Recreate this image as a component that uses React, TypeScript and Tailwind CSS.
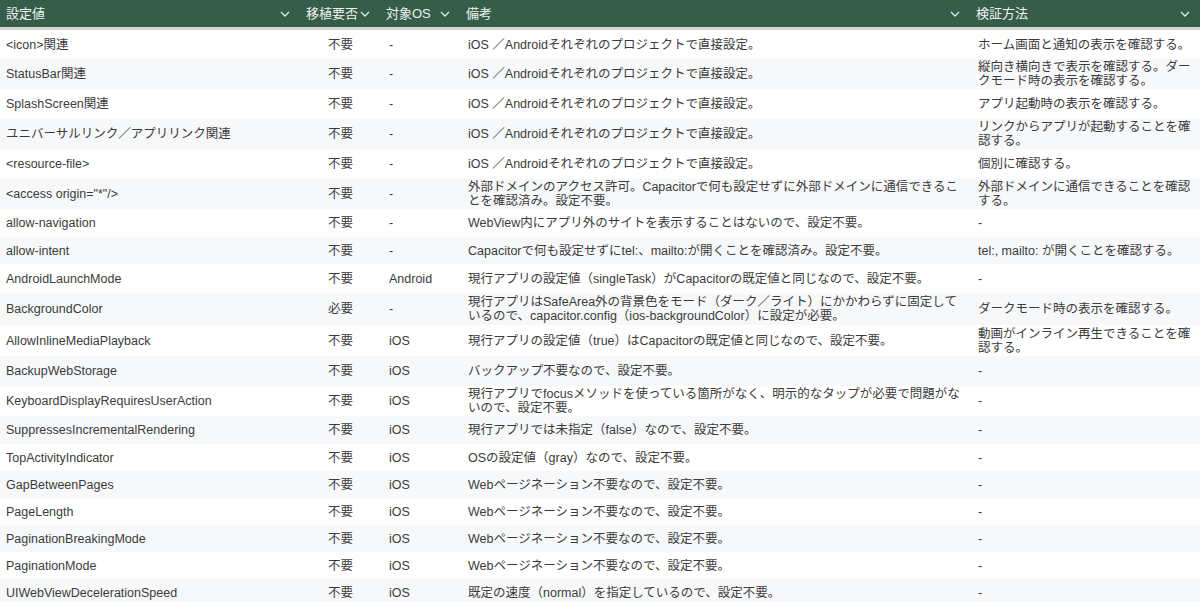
import React from "react";

const rows: [string, string, string, string, string, number][] = [
  ["<icon>関連", "不要", "-", "iOS ／Androidそれぞれのプロジェクトで直接設定。", "ホーム画面と通知の表示を確認する。", 29],
  ["StatusBar関連", "不要", "-", "iOS ／Androidそれぞれのプロジェクトで直接設定。", "縦向き横向きで表示を確認する。ダークモード時の表示を確認する。", 30],
  ["SplashScreen関連", "不要", "-", "iOS ／Androidそれぞれのプロジェクトで直接設定。", "アプリ起動時の表示を確認する。", 30],
  ["ユニバーサルリンク／アプリリンク関連", "不要", "-", "iOS ／Androidそれぞれのプロジェクトで直接設定。", "リンクからアプリが起動することを確認する。", 30],
  ["<resource-file>", "不要", "-", "iOS ／Androidそれぞれのプロジェクトで直接設定。", "個別に確認する。", 30],
  ["<access origin=\"*\"/>", "不要", "-", "外部ドメインのアクセス許可。Capacitorで何も設定せずに外部ドメインに通信できることを確認済み。設定不要。", "外部ドメインに通信できることを確認する。", 30],
  ["allow-navigation", "不要", "-", "WebView内にアプリ外のサイトを表示することはないので、設定不要。", "-", 28],
  ["allow-intent", "不要", "-", "Capacitorで何も設定せずにtel:、mailto:が開くことを確認済み。設定不要。", "tel:, mailto: が開くことを確認する。", 27],
  ["AndroidLaunchMode", "不要", "Android", "現行アプリの設定値（singleTask）がCapacitorの既定値と同じなので、設定不要。", "-", 29],
  ["BackgroundColor", "必要", "-", "現行アプリはSafeArea外の背景色をモード（ダーク／ライト）にかかわらずに固定しているので、capacitor.config（ios-backgroundColor）に設定が必要。", "ダークモード時の表示を確認する。", 32],
  ["AllowInlineMediaPlayback", "不要", "iOS", "現行アプリの設定値（true）はCapacitorの既定値と同じなので、設定不要。", "動画がインライン再生できることを確認する。", 31],
  ["BackupWebStorage", "不要", "iOS", "バックアップ不要なので、設定不要。", "-", 30],
  ["KeyboardDisplayRequiresUserAction", "不要", "iOS", "現行アプリでfocusメソッドを使っている箇所がなく、明示的なタップが必要で問題がないので、設定不要。", "-", 30],
  ["SuppressesIncrementalRendering", "不要", "iOS", "現行アプリでは未指定（false）なので、設定不要。", "-", 28],
  ["TopActivityIndicator", "不要", "iOS", "OSの設定値（gray）なので、設定不要。", "-", 27],
  ["GapBetweenPages", "不要", "iOS", "Webページネーション不要なので、設定不要。", "-", 27],
  ["PageLength", "不要", "iOS", "Webページネーション不要なので、設定不要。", "-", 27],
  ["PaginationBreakingMode", "不要", "iOS", "Webページネーション不要なので、設定不要。", "-", 27],
  ["PaginationMode", "不要", "iOS", "Webページネーション不要なので、設定不要。", "-", 27],
  ["UIWebViewDecelerationSpeed", "不要", "iOS", "既定の速度（normal）を指定しているので、設定不要。", "-", 27],
];

const Chev = () => (
  <svg width="10" height="6" viewBox="0 0 10 6" className="shrink-0">
    <path d="M1 1l4 4 4-4" fill="none" stroke="#e5ece8" strokeWidth="1.3" />
  </svg>
);

const H = ({ w, label }: { w: string; label: string }) => (
  <div className={`${w} flex items-center justify-between pl-[6px] pr-[10px]`}>
    <span>{label}</span>
    <Chev />
  </div>
);

export default function App() {
  return (
    <div className="w-[1200px] h-[602px] overflow-hidden bg-white text-[#3b3b3b] text-[12.5px] leading-[14px]" style={{ fontFamily: "'Liberation Sans','Noto Sans CJK JP',sans-serif" }}>
      <div className="flex h-[27px] bg-[#365c4a] text-[#eef3f0] text-[13px] border-b-[3px] border-[#d3d6d4] box-content">
        <H w="w-[300px]" label="設定値" />
        <H w="w-[80px]" label="移植要否" />
        <H w="w-[80px]" label="対象OS" />
        <H w="w-[510px]" label="備考" />
        <H w="w-[230px]" label="検証方法" />
      </div>
      {rows.map((r, i) => (
        <div key={i} className={`flex items-center ${i % 2 ? "bg-[#f7f8f9]" : "bg-white"}`} style={{ height: r[5] }}>
          <div className="w-[300px] pl-[6px]">{r[0]}</div>
          <div className="w-[80px] pl-[28px]">{r[1]}</div>
          <div className="w-[80px] pl-[9px]">{r[2]}</div>
          <div className="w-[510px] pl-[8px] pr-[6px]">{r[3]}</div>
          <div className="w-[230px] pl-[8px] pr-[6px]">{r[4]}</div>
        </div>
      ))}
    </div>
  );
}
